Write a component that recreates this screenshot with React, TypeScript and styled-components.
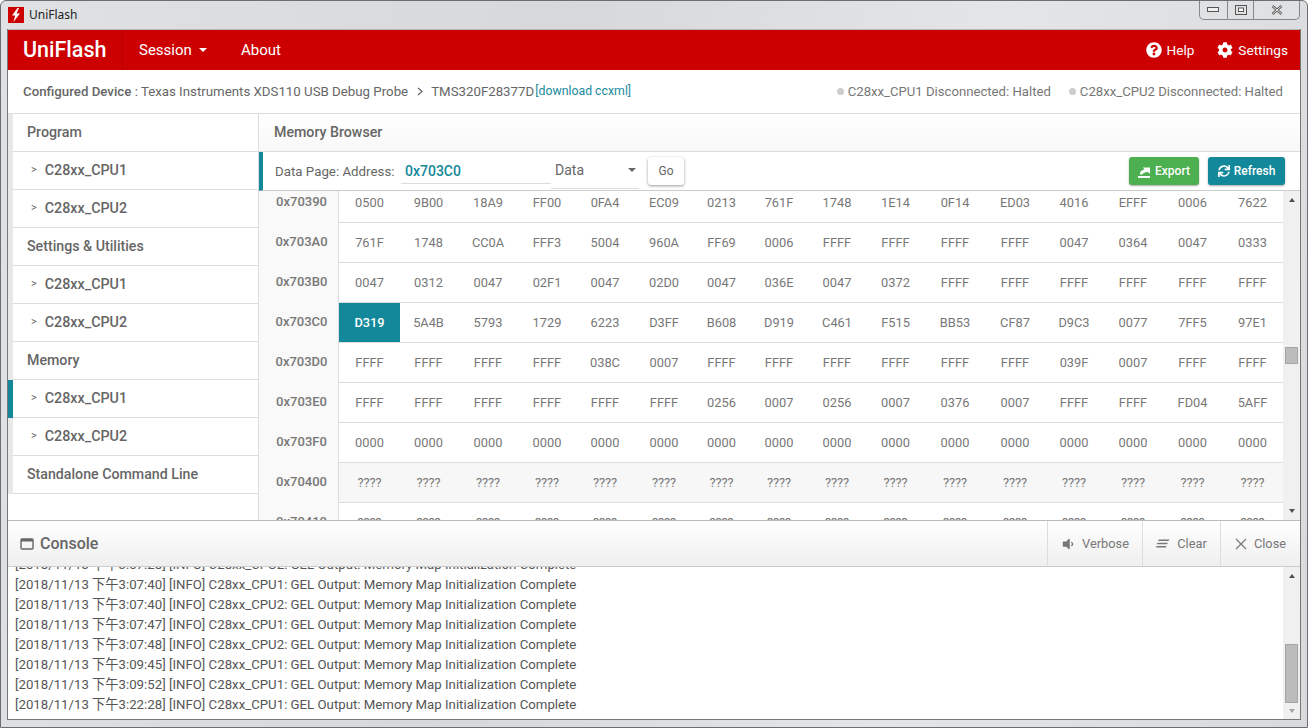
import React from 'react';
import styled, { createGlobalStyle } from 'styled-components';
import { FaQuestionCircle, FaCog, FaVolumeDown, FaSync } from 'react-icons/fa';

const Global = createGlobalStyle`
  html, body { margin: 0; padding: 0; width: 1308px; height: 728px; overflow: hidden; }
  * { box-sizing: border-box; }
  body { font-family: Roboto, "Noto Sans CJK TC", sans-serif; color: #666; }
`;

const Win = styled.div`
  width: 1308px; height: 728px; display: flex; flex-direction: column;
  background: linear-gradient(100deg, #dfe1e3 0%, #d6d8da 40%, #e3e5e6 70%, #d8dadc 100%);
  border: 1px solid #6b6f74; border-radius: 6px 6px 0 0; padding: 0 7px 7px;
`;
const TitleBar = styled.div`height: 28px; display: flex; align-items: center; flex: none;`;
const TitleIcon = styled.div`width: 16px; height: 16px; background: #cc0000; display: flex; align-items: center; justify-content: center; margin-right: 5px;`;
const TitleText = styled.span`font: 12px "Noto Sans", sans-serif; color: #222; padding-bottom: 2px;`;
const WinBtns = styled.div`
  margin-left: auto; display: flex; height: 19px; align-self: flex-start;
  border: 1px solid #84888c; border-top: none; border-radius: 0 0 5px 5px; width: 101px; background: #dfe1e3;
`;
const WinBtn = styled.div<{ $w: number }>`
  width: ${p => p.$w}px; display: flex; align-items: center; justify-content: center;
  & + & { border-left: 1px solid #84888c; }
`;
const App = styled.div`
  flex: 1; min-height: 0; display: flex; flex-direction: column; background: #fff;
  border: 1px solid #777; border-top: none;
  margin-left: -1px; margin-right: -1px;
`;
const Header = styled.header`height: 41px; background: #cc0000; display: flex; align-items: center; color: #fff; flex: none; border-top: 1px solid #b5b5b5;`;
const Brand = styled.div`width: 115px; height: 100%; padding-left: 15px; font: 500 21.5px/40px Roboto, sans-serif; border-right: 1px solid #b80000; flex: none;`;
const NavItem = styled.div<{ $w: number; $pad?: number }>`
  font-size: 15px; width: ${p => p.$w}px; padding-left: ${p => p.$pad ?? 0}px; display: flex; align-items: center; white-space: nowrap; flex: none;
`;
const Caret = styled.span`
  display: inline-block; margin-left: 7px; width: 0; height: 0;
  border-left: 4.5px solid transparent; border-right: 4.5px solid transparent; border-top: 4.5px solid #fff;
`;
const HeaderRight = styled.div`margin-left: auto; display: flex; align-items: center; gap: 23px; padding-right: 12px; font-size: 13.6px;`;
const HeaderLink = styled.div`display: flex; align-items: center; gap: 5px;`;

const SubBar = styled.div`height: 44px; flex: none; display: flex; align-items: center; padding: 0 17px 0 15px; border-bottom: 1px solid #ddd; font-size: 13.27px; color: #666; white-space: nowrap;`;
const Strong = styled.b`font-weight: 500;`;
const Chev = styled.span`margin: 0 8px 0 9px; display: inline-flex;`;
const DL = styled.span`color: #1a8a9d; font-size: 12.3px; margin-left: 1px; position: relative; top: -1px;`;
const Status = styled.div`margin-left: auto; display: flex; gap: 18px; color: #777; font-size: 13.15px;`;
const StatusItem = styled.span`display: flex; align-items: center; gap: 4px;`;
const Dot = styled.i`width: 7px; height: 7px; border-radius: 50%; background: #ccc; display: block;`;

const Mid = styled.div`height: 407px; flex: none; display: flex; overflow: hidden; border-bottom: 1px solid #bbb;`;
const Side = styled.nav`width: 251px; flex: none; border-right: 1px solid #ddd; background: #fff; display: flex; flex-direction: column;`;
const SideList = styled.div`flex: none; border-left: 5px solid #e8e8e8; display: flex; flex-direction: column;`;
const SideGroup = styled.div`height: 38px; flex: none; border-bottom: 1px solid #ddd; padding: 0 0 2px 14px; display: flex; align-items: center; font-size: 14.2px; font-weight: 500; color: #666; background: #fff;`;
const SideItem = styled.div<{ $active?: boolean }>`
  height: 38px; flex: none; border-bottom: 1px solid #ddd; display: flex; align-items: center; padding: 0 0 2px 18px; font-size: 14.3px; color: #666; font-weight: 500; position: relative;
  &::before { content: ''; display: ${p => (p.$active ? 'block' : 'none')}; position: absolute; left: -5px; top: 0; bottom: -1px; width: 5px; background: #12889a; }
`;
const Gt = styled.span`font-size: 11px; margin-right: 8px; font-weight: 400;`;

const Main = styled.main`flex: 1; min-width: 0; display: flex; flex-direction: column;`;
const PanelHead = styled.div`height: 38px; flex: none; display: flex; align-items: center; padding: 0 0 2px 15px; font-size: 14.2px; font-weight: 500; color: #666; border-bottom: 1px solid #ddd; background: linear-gradient(#fff, #f8f8f8);`;
const Controls = styled.div`height: 39px; flex: none; display: flex; align-items: center; border-left: 4px solid #12889a; border-bottom: 1px solid #ccc; padding-left: 12px; padding-right: 15px; font-size: 13.3px; color: #666; background: #fff;`;
const Label = styled.span`width: 126px; flex: none;`;
const AddrField = styled.div`width: 150px; height: 25px; border-bottom: 1px solid #ddd; color: #12889a; font-weight: 500; font-size: 14px; padding-left: 4px; line-height: 25px; flex: none;`;
const SelectField = styled.div`width: 88px; height: 31px; border-bottom: 1px solid #ddd; font-size: 14px; display: flex; align-items: center; padding: 0 3px 5px 4px; justify-content: space-between; flex: none; margin-top: 4px;`;
const SelectCaret = styled.span`width: 0; height: 0; border-left: 4.5px solid transparent; border-right: 4.5px solid transparent; border-top: 4.5px solid #666;`;
const GoBtn = styled.button`width: 36px; height: 28px; margin-left: 9px; border: none; background: #fff; border-radius: 3px; box-shadow: 0 1px 3px rgba(0,0,0,.4); font: 12px Roboto, sans-serif; color: #666; padding: 0;`;
const ActionBtn = styled.button<{ $bg: string; $w: number }>`
  width: ${p => p.$w}px; height: 28px; border: none; border-radius: 3px; background: ${p => p.$bg}; color: #fff;
  font: 500 12px Roboto, sans-serif; display: flex; align-items: center; justify-content: center; gap: 4px; padding: 0; flex: none;
  box-shadow: 0 1px 2px rgba(0,0,0,.35);
`;
const Actions = styled.div`margin-left: auto; display: flex; gap: 9px;`;

const ScrollWrap = styled.div`flex: 1; min-height: 0; display: flex;`;
const TableClip = styled.div`flex: 1; min-width: 0; overflow: hidden; background: #fff;`;
const TableGrid = styled.div`
  margin-top: -8px; display: grid;
  grid-template-columns: 80px 61px 57px 62px 56px 60px 58px 57px 58px 58px 59px 60px 60px 58px 60px 59px 61px;
  grid-auto-rows: 40px;
`;
const AddrCell = styled.div`background: #f9f9f9; border-right: 1px solid #ddd; display: flex; align-items: center; justify-content: center; font-size: 13px; color: #777; font-weight: 500; padding: 0 0 3px 6px;`;
const Cell = styled.div<{ $active?: boolean; $unk?: boolean }>`
  display: flex; align-items: center; justify-content: center; font-size: 12.8px;
  color: ${p => (p.$active ? '#fff' : '#777')}; font-weight: ${p => (p.$active ? 500 : 400)};
  background: ${p => (p.$active ? '#12889a' : p.$unk ? '#f7f7f7' : '#fff')};
  border-bottom: 1px solid #ddd;
`;
const VBar = styled.div`width: 17px; flex: none; background: #f0f0f0; display: flex; flex-direction: column; align-items: center;`;
const ArrowUp = styled.span<{ $dim?: boolean }>`width: 0; height: 0; border-left: 3.5px solid transparent; border-right: 3.5px solid transparent; border-bottom: 4px solid ${p => (p.$dim ? '#a3a3a3' : '#505050')};`;
const ArrowDown = styled.span<{ $dim?: boolean }>`width: 0; height: 0; border-left: 3.5px solid transparent; border-right: 3.5px solid transparent; border-top: 4px solid ${p => (p.$dim ? '#a3a3a3' : '#505050')};`;
const Gap = styled.div<{ $h: number }>`height: ${p => p.$h}px; flex: none;`;
const Thumb = styled.div<{ $h: number }>`width: 13px; height: ${p => p.$h}px; background: #bcbcbc; border: 1px solid #a5a5a5; flex: none;`;

const ConsoleHead = styled.div`height: 46px; flex: none; display: flex; align-items: stretch; background: linear-gradient(#fff, #efefef); border-bottom: 1px solid #ccc;`;
const ConsoleTitle = styled.div`display: flex; align-items: center; gap: 6px; padding-left: 12px; font-size: 16px; font-weight: 500; color: #666;`;
const ConsoleBtn = styled.div<{ $w: number }>`width: ${p => p.$w}px; border-left: 1px solid #ddd; display: flex; align-items: center; justify-content: center; gap: 7px; font-size: 12.8px; color: #777; flex: none;`;
const ConsoleBtns = styled.div`margin-left: auto; display: flex;`;
const ConsoleBody = styled.div`flex: 1; min-height: 0; display: flex;`;
const Log = styled.div`flex: 1; min-width: 0; overflow: hidden; padding-left: 7px; color: #555; font-size: 13.22px;`;
const LogInner = styled.div`margin-top: -12px;`;
const LogLine = styled.div`height: 20px; line-height: 20px; white-space: nowrap;`;

const cols = ['0x70390','0x703A0','0x703B0','0x703C0','0x703D0','0x703E0','0x703F0','0x70400','0x70410'];
const data = [
  '0500 9B00 18A9 FF00 0FA4 EC09 0213 761F 1748 1E14 0F14 ED03 4016 EFFF 0006 7622',
  '761F 1748 CC0A FFF3 5004 960A FF69 0006 FFFF FFFF FFFF FFFF 0047 0364 0047 0333',
  '0047 0312 0047 02F1 0047 02D0 0047 036E 0047 0372 FFFF FFFF FFFF FFFF FFFF FFFF',
  'D319 5A4B 5793 1729 6223 D3FF B608 D919 C461 F515 BB53 CF87 D9C3 0077 7FF5 97E1',
  'FFFF FFFF FFFF FFFF 038C 0007 FFFF FFFF FFFF FFFF FFFF FFFF 039F 0007 FFFF FFFF',
  'FFFF FFFF FFFF FFFF FFFF FFFF 0256 0007 0256 0007 0376 0007 FFFF FFFF FD04 5AFF',
  '0000 0000 0000 0000 0000 0000 0000 0000 0000 0000 0000 0000 0000 0000 0000 0000',
  '???? ???? ???? ???? ???? ???? ???? ???? ???? ???? ???? ???? ???? ???? ???? ????',
  '???? ???? ???? ???? ???? ???? ???? ???? ???? ???? ???? ???? ???? ???? ???? ????',
];
const logs = [
  ['3:07:28','2'],['3:07:40','1'],['3:07:40','2'],['3:07:47','1'],['3:07:48','2'],['3:09:45','1'],['3:09:52','1'],['3:22:28','1'],
];

export default function Page() {
  return (
    <Win>
      <Global />
      <TitleBar>
        <TitleIcon>
          <svg width="10" height="14" viewBox="0 0 10 14"><path d="M6.5 0 L1 7.5 H4.2 L2.5 14 L9 5.5 H5.6 L8 0 Z" fill="#fff" /></svg>
        </TitleIcon>
        <TitleText>UniFlash</TitleText>
        <WinBtns>
          <WinBtn $w={27}><svg width="12" height="6" viewBox="0 0 12 6"><rect x=".5" y=".5" width="11" height="4" fill="#eee" stroke="#555" /></svg></WinBtn>
          <WinBtn $w={27}><svg width="12" height="10" viewBox="0 0 12 10"><rect x=".5" y=".5" width="11" height="9" fill="none" stroke="#555" /><rect x="3.5" y="3" width="5" height="3.5" fill="#fff" stroke="#555" /></svg></WinBtn>
          <WinBtn $w={46}><svg width="12" height="10" viewBox="0 0 12 10"><path d="M1.5 1 L10.5 9 M10.5 1 L1.5 9" stroke="#555" strokeWidth="2.4" /><path d="M1.5 1 L10.5 9 M10.5 1 L1.5 9" stroke="#eee" strokeWidth="1" /></svg></WinBtn>
        </WinBtns>
      </TitleBar>
      <App>
        <Header>
          <Brand>UniFlash</Brand>
          <NavItem $w={118} $pad={16}>Session <Caret /></NavItem>
          <NavItem $w={60}>About</NavItem>
          <HeaderRight>
            <HeaderLink><FaQuestionCircle size={16} /> Help</HeaderLink>
            <HeaderLink><FaCog size={16} /> Settings</HeaderLink>
          </HeaderRight>
        </Header>
        <SubBar>
          <Strong>Configured Device</Strong>&nbsp;: Texas Instruments XDS110 USB Debug Probe
          <Chev><svg width="6" height="9" viewBox="0 0 6 9"><path d="M1 1 L5 4.5 L1 8" fill="none" stroke="#666" strokeWidth="1.2" /></svg></Chev>
          TMS320F28377D
          <DL>[download ccxml]</DL>
          <Status>
            <StatusItem><Dot /> C28xx_CPU1 Disconnected: Halted</StatusItem>
            <StatusItem><Dot /> C28xx_CPU2 Disconnected: Halted</StatusItem>
          </Status>
        </SubBar>
        <Mid>
          <Side>
            <SideList>
              <SideGroup>Program</SideGroup>
              <SideItem><Gt>&gt;</Gt>C28xx_CPU1</SideItem>
              <SideItem><Gt>&gt;</Gt>C28xx_CPU2</SideItem>
              <SideGroup>Settings &amp; Utilities</SideGroup>
              <SideItem><Gt>&gt;</Gt>C28xx_CPU1</SideItem>
              <SideItem><Gt>&gt;</Gt>C28xx_CPU2</SideItem>
              <SideGroup>Memory</SideGroup>
              <SideItem $active><Gt>&gt;</Gt>C28xx_CPU1</SideItem>
              <SideItem><Gt>&gt;</Gt>C28xx_CPU2</SideItem>
              <SideGroup>Standalone Command Line</SideGroup>
            </SideList>
          </Side>
          <Main>
            <PanelHead>Memory Browser</PanelHead>
            <Controls>
              <Label>Data Page: Address:</Label>
              <AddrField>0x703C0</AddrField>
              <SelectField>Data <SelectCaret /></SelectField>
              <GoBtn>Go</GoBtn>
              <Actions>
                <ActionBtn $bg="#4caf50" $w={70}>
                  <svg width="13" height="13" viewBox="0 0 13 13"><path d="M0 11h12v2H0z" fill="#fff" /><path d="M2 9.5 C2 7 3 5 6.5 4.5 L4.8 2.5 H12 V9 L10 7 C7 7.2 5 8 4.2 9.5z" fill="#fff" /></svg>
                  Export
                </ActionBtn>
                <ActionBtn $bg="#12889a" $w={77}>
                  <FaSync size={12} />
                  Refresh
                </ActionBtn>
              </Actions>
            </Controls>
            <ScrollWrap>
              <TableClip>
                <TableGrid>
                  {cols.map((a, r) => (
                    <React.Fragment key={a}>
                      <AddrCell>{a}</AddrCell>
                      {data[r].split(' ').map((v, c) => (
                        <Cell key={c} $active={r === 3 && c === 0} $unk={r === 7}>{v}</Cell>
                      ))}
                    </React.Fragment>
                  ))}
                </TableGrid>
              </TableClip>
              <VBar>
                <Gap $h={7} /><ArrowUp />
                <Gap $h={145} /><Thumb $h={17} />
                <Gap $h={145} /><ArrowDown />
              </VBar>
            </ScrollWrap>
          </Main>
        </Mid>
        <ConsoleHead>
          <ConsoleTitle>
            <svg width="14" height="12" viewBox="0 0 14 12"><rect x="1" y="1" width="12" height="10" rx="1" fill="none" stroke="#666" strokeWidth="1.4" /><rect x="1" y="1" width="12" height="2.5" fill="#666" /></svg>
            Console
          </ConsoleTitle>
          <ConsoleBtns>
            <ConsoleBtn $w={95}><FaVolumeDown size={14} /> Verbose</ConsoleBtn>
            <ConsoleBtn $w={78}>
              <svg width="14" height="9" viewBox="0 0 14 9"><path d="M3 .5h10.5l-1 1.6H2z M1.5 3.7h10.5l-1 1.6H.5z M.5 7h10l-.6 1.6H0z" fill="#777" /></svg>
              Clear
            </ConsoleBtn>
            <ConsoleBtn $w={80}>
              <svg width="12" height="12" viewBox="0 0 12 12"><path d="M1 1 L11 11 M11 1 L1 11" stroke="#777" strokeWidth="1.2" /></svg>
              Close
            </ConsoleBtn>
          </ConsoleBtns>
        </ConsoleHead>
        <ConsoleBody>
          <Log>
            <LogInner>
              {logs.map(([t, c], i) => (
                <LogLine key={i}>[2018/11/13 下午{t}] [INFO] C28xx_CPU{c}: GEL Output: Memory Map Initialization Complete</LogLine>
              ))}
            </LogInner>
          </Log>
          <VBar>
            <Gap $h={7} /><ArrowUp />
            <Gap $h={66} /><Thumb $h={59} />
            <Gap $h={6} /><ArrowDown $dim />
          </VBar>
        </ConsoleBody>
      </App>
    </Win>
  );
}
